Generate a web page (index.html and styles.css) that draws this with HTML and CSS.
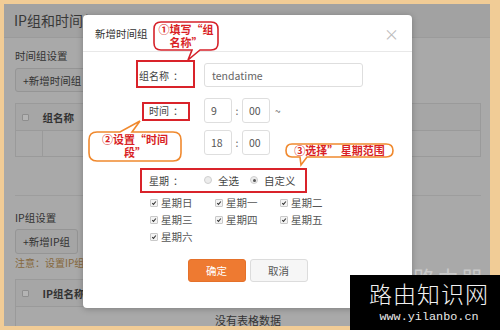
FILE: index.html
```html
<!DOCTYPE html>
<html lang="zh-CN">
<head>
<meta charset="utf-8">
<title>新增时间组</title>
<link rel="stylesheet" href="styles.css">
</head>
<body>
<div class="screen">
  <div class="page">
    <div class="page-head">IP组和时间组</div>
    <div class="page-body">
      <div class="sec-title first">时间组设置</div>
      <div class="toolbar"><button class="btn">+新增时间组</button></div>
      <table class="grid">
        <tr class="head"><td class="c-check"><span class="pcb"></span></td><td class="c-name">组名称</td><td></td></tr>
        <tr class="body"><td class="c-check"></td><td></td><td></td></tr>
      </table>
      <div class="sep"></div>
      <div class="sec-title">IP组设置</div>
      <div class="toolbar tb2"><button class="btn">+新增IP组</button><button class="btn">删除</button></div>
      <div class="note">注意：设置IP组时，IP地址范围不能重叠</div>
      <table class="grid g2">
        <tr class="head"><td class="c-check"><span class="pcb"></span></td><td class="c-name">IP组名称</td><td></td></tr>
        <tr class="body"><td colspan="3" class="empty">没有表格数据</td></tr>
      </table>
    </div>
  </div>

  <div class="modal">
    <div class="modal-head"><span class="m-title">新增时间组</span><span class="close">×</span></div>
    <div class="modal-body">
      <div class="row r1"><span class="label">组名称<span class="cc">：</span></span><span class="ctrl"><span class="input">tendatime</span></span></div>
      <div class="row r2"><span class="label">时间<span class="cc">：</span></span><span class="ctrl"><span class="tbox">9</span><span class="colon">:</span><span class="tbox">00</span><span class="tilde">~</span></span></div>
      <div class="row r3"><span class="label"></span><span class="ctrl"><span class="tbox">18</span><span class="colon">:</span><span class="tbox">00</span></span></div>
      <div class="row r4"><span class="label">星期<span class="cc">：</span></span><span class="ctrl"><span class="radio"></span><span class="rtext">全选</span><span class="radio on"></span><span class="rtext">自定义</span></span></div>
      <div class="days">
        <span class="day"><span class="cb"><svg viewBox="0 0 8 8"><path d="M1.6 4.2L3.3 5.9L6.5 2"/></svg></span>星期日</span>
        <span class="day"><span class="cb"><svg viewBox="0 0 8 8"><path d="M1.6 4.2L3.3 5.9L6.5 2"/></svg></span>星期一</span>
        <span class="day"><span class="cb"><svg viewBox="0 0 8 8"><path d="M1.6 4.2L3.3 5.9L6.5 2"/></svg></span>星期二</span>
        <span class="day"><span class="cb"><svg viewBox="0 0 8 8"><path d="M1.6 4.2L3.3 5.9L6.5 2"/></svg></span>星期三</span>
        <span class="day"><span class="cb"><svg viewBox="0 0 8 8"><path d="M1.6 4.2L3.3 5.9L6.5 2"/></svg></span>星期四</span>
        <span class="day"><span class="cb"><svg viewBox="0 0 8 8"><path d="M1.6 4.2L3.3 5.9L6.5 2"/></svg></span>星期五</span>
        <span class="day"><span class="cb"><svg viewBox="0 0 8 8"><path d="M1.6 4.2L3.3 5.9L6.5 2"/></svg></span>星期六</span>
      </div>
      <div class="actions"><button class="ok">确定</button><button class="cancel">取消</button></div>
    </div>
  </div>

  <div class="hl hl1"></div>
  <div class="hl hl2"></div>
  <div class="hl hl3"></div>

  <div class="callout co1">
    <svg class="bubble" width="66" height="40" viewBox="0 0 66 40"><path d="M8 1H58Q65 1 65 8V22Q65 29 58 29H47L35 39L39 29H8Q1 29 1 22V8Q1 1 8 1Z"/></svg>
    <span class="ct">①填写“组<br>名称”</span>
  </div>
  <div class="callout co2">
    <svg class="bubble" width="94" height="43" viewBox="0 -12 94 43"><path d="M9 1H32L52 -10L44 1H85Q93 1 93 9V22Q93 30 85 30H9Q1 30 1 22V9Q1 1 9 1Z"/></svg>
    <span class="ct">②设置“时间<br>段”</span>
  </div>
  <div class="callout co3">
    <svg class="bubble" width="109" height="23" viewBox="0 0 109 23"><path d="M7 1H101Q108 1 108 7.5Q108 14 101 14H22L16 22L15 14H7Q1 14 1 7.5Q1 1 7 1Z"/></svg>
    <span class="ct">③选择” 星期范围</span>
  </div>

  <div class="ghost"><span class="ghost-text">路由器</span></div>
  <div class="watermark">
    <div class="wm-big">路由知识网</div>
    <div class="wm-url">www.yilanbo.cn</div>
  </div>
</div>
</body>
</html>
```

FILE: styles.css
```css
* { box-sizing: border-box; margin: 0; padding: 0; }
html, body { width: 500px; height: 330px; overflow: hidden; }
body { font-family: "Noto Sans CJK SC", "Noto Sans", sans-serif; color: #333; background: #f1cc96; }

.screen { position: relative; width: 500px; height: 330px; padding: 4px 10px 4px 4px; background: #f1cc96; }
.page { height: 100%; background: #a9a9a9; overflow: hidden; }
.page-head { height: 34px; background: #a2a2a2; border-bottom: 1px solid #9b9b9b; padding-left: 10px; font-size: 14px; line-height: 33px; color: #383838; }
.page-body { padding: 0 9px 0 11px; }
.sec-title { font-size: 10.5px; line-height: 14px; margin-top: 15px; color: #333; }
.sec-title.first { margin-top: 11px; }
.toolbar { display: flex; gap: 5px; margin-top: 5px; }
.toolbar.tb2 { margin-top: 4px; }
.btn { height: 24px; padding: 0 7px; border: 1px solid #959595; border-radius: 3px; background: #a5a5a5; font-family: inherit; font-size: 10.5px; color: #333; }
.tb2 .btn { height: 25px; }
.note { font-size: 10px; line-height: 12px; margin-top: 3px; color: #86683c; }

.grid { width: 100%; border-collapse: collapse; margin-top: 11px; font-size: 10.5px; }
.grid.g2 { margin-top: 10px; }
.grid td { border: 1px solid #9a9a9a; }
.grid .head td { height: 27px; background: #a6a6a6; }
.grid .body td { height: 26px; }
.grid td.c-check { width: 27px; padding-left: 6px; border-right: none; }
.grid td.c-name { width: 120px; font-weight: bold; border-left: none; padding-left: 0; }
.pcb { display: block; width: 7px; height: 7px; border: 1px solid #8e8e8e; background: #b4b4b4; border-radius: 1px; }
.grid .body td.empty { text-align: center; height: 20px; vertical-align: bottom; line-height: 12px; padding-bottom: 1px; color: #333; font-size: 11px; border-bottom: none; }
.sep { height: 1px; background: #9d9d9d; margin-top: 38px; }

.modal { position: absolute; left: 83px; top: 15px; width: 329px; height: 293px; background: #fff; border-radius: 4px; box-shadow: 0 1px 6px rgba(0,0,0,.25); }
.modal-head { height: 37px; border-bottom: 1px solid #e8e8e8; display: flex; align-items: center; justify-content: space-between; padding: 0 13px 0 12px; }
.m-title { font-size: 10.5px; color: #333; }
.close { font-size: 15px; color: #bdbdbd; line-height: 1; }
.modal-body { padding-top: 11px; }
.row { display: flex; align-items: center; }
.label { width: 100px; text-align: right; font-size: 10px; color: #444; }
.cc { padding-left: 4px; }
.ctrl { margin-left: 21px; display: flex; align-items: center; }
.r2 { margin-top: 11px; }
.r3 { margin-top: 7px; }
.r4 { margin-top: 15px; height: 20px; }
.input { display: flex; align-items: center; width: 159px; height: 24px; border: 1px solid #dedede; border-radius: 3px; padding-left: 7px; font-size: 10.5px; color: #666; }
.tbox { display: flex; align-items: center; width: 28px; height: 25px; border: 1px solid #dedede; border-radius: 3px; padding-left: 6px; font-size: 10.5px; color: #555; }
.colon { width: 10px; text-align: center; font-size: 10.5px; color: #666; }
.tilde { margin-left: 5px; font-size: 10px; color: #666; }
.radio { width: 8px; height: 8px; border: 1px solid #cfcfcf; border-radius: 50%; background: #ececec; position: relative; }
.radio.on::after { content: ""; position: absolute; left: 1.5px; top: 1.5px; width: 3px; height: 3px; border-radius: 50%; background: #555; }
.rtext { font-size: 10.5px; color: #444; margin-left: 6px; margin-right: 11px; }

.days { display: grid; grid-template-columns: 65px 65px 65px; grid-auto-rows: 17px; padding-left: 67px; margin-top: 4px; }
.day { display: flex; align-items: center; font-size: 10.5px; color: #555; }
.cb { display: flex; width: 8px; height: 8px; border: 1px solid #c9c9c9; background: #f3f3f3; border-radius: 1px; margin-right: 3px; }
.cb svg { width: 100%; height: 100%; }
.cb path { fill: none; stroke: #333; stroke-width: 1.4; }

.actions { display: flex; justify-content: center; gap: 4px; margin-top: 14px; }
.actions button { width: 58px; height: 23px; border-radius: 3px; font-family: inherit; font-size: 10.5px; }
.ok { background: #ee7a31; border: 1px solid #e5712a; color: #fff; }
.cancel { background: #f6f6f6; border: 1px solid #dcdcdc; color: #555; }

.hl { position: absolute; border: 2px solid #d9232a; }
.hl1 { left: 136px; top: 60px; width: 59px; height: 28px; }
.hl2 { left: 142px; top: 102px; width: 48px; height: 19px; }
.hl3 { left: 140px; top: 168px; width: 167px; height: 25px; }

.callout { position: absolute; display: flex; align-items: flex-start; justify-content: center; }
.bubble { position: absolute; left: 0; top: 0; overflow: visible; }
.bubble path { fill: #fff; stroke-width: 1.6; }
.co1 .bubble path { stroke: #d6222a; }
.co2 .bubble path, .co3 .bubble path { stroke: #f0892e; }
.ct { position: relative; font-weight: bold; color: #d91f26; font-size: 11px; line-height: 13px; text-align: center; white-space: nowrap; }
.co1 { left: 153px; top: 21px; width: 66px; height: 30px; padding-top: 2px; }
.co2 { left: 88px; top: 131px; width: 94px; height: 31px; padding-top: 2px; }
.co2 .bubble { top: -12px; }
.co3 { left: 285px; top: 143px; width: 109px; height: 15px; padding-top: 1px; }
.co3 .ct { font-size: 11px; line-height: 12px; }

.ghost { position: absolute; left: 413px; top: 268px; width: 70px; height: 7px; overflow: hidden; }
.ghost-text { display: block; margin-top: -5px; font-size: 22px; line-height: 28px; color: #c9c9c9; letter-spacing: 2px; white-space: nowrap; }
.watermark { position: absolute; left: 350px; top: 275px; width: 150px; height: 55px; background: #000; display: flex; flex-direction: column; align-items: center; padding: 4px 0 0 8px; }
.wm-big { font-size: 23px; line-height: 28px; color: #f2f2f2; letter-spacing: 1px; font-weight: 300; }
.wm-url { font-family: "Liberation Mono", monospace; font-size: 11.8px; line-height: 14px; color: #e8e8e8; margin-top: 3px; }
```
